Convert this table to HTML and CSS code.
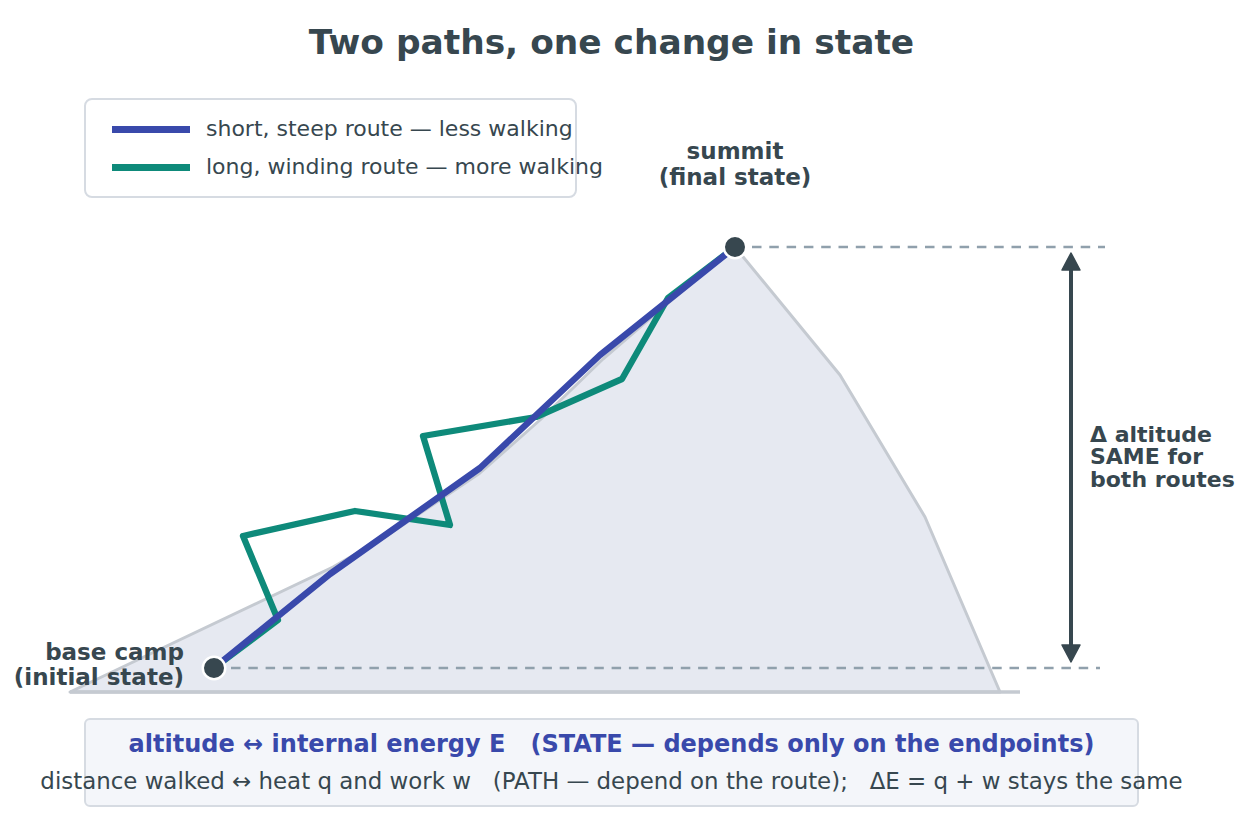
FILE: index.html
```html
<!DOCTYPE html>
<html lang="en">
<head>
<meta charset="utf-8">
<title>Two paths, one change in state</title>
<link rel="stylesheet" href="styles.css">
</head>
<body>
<div class="page">
  <h1 class="title">Two paths, one change in state</h1>
  <div class="chart">
    <svg class="plot" width="1249" height="657" viewBox="0 61 1249 657" xmlns="http://www.w3.org/2000/svg">
      <polygon class="mountain" points="70,692 333,567 385,537 480,473 540,420 603,359 668,303 735,247 840,375 925,517 1000,692"/>
      <line class="ground" x1="70" y1="692" x2="1020" y2="692"/>
      <line class="guide" x1="752" y1="247" x2="1105" y2="247"/>
      <line class="guide" x1="231" y1="668" x2="1100" y2="668"/>
      <polyline class="route-long" points="214,668 278,620 243,536 355,511 450,525 423,436 536,417 622,379 668,298 735,247"/>
      <polyline class="route-short" points="214,668 330,574 480,468 600,355 735,247"/>
      <circle class="state-dot" cx="214" cy="668" r="11.25"/>
      <circle class="state-dot" cx="735" cy="247" r="11.25"/>
      <line class="delta-shaft" x1="1071" y1="266" x2="1071" y2="650"/>
      <polygon class="delta-head" points="1071,253 1062,270 1080,270"/>
      <polygon class="delta-head" points="1071,662 1062,645 1080,645"/>
      <text class="label" text-anchor="middle"><tspan x="735" y="159">summit</tspan><tspan x="735" y="185">(final state)</tspan></text>
      <text class="label" text-anchor="end"><tspan x="184" y="660">base camp</tspan><tspan x="184" y="685">(initial state)</tspan></text>
      <text class="label label-side" text-anchor="start"><tspan x="1090" y="442">Δ altitude</tspan><tspan x="1090" y="464">SAME for</tspan><tspan x="1090" y="487">both routes</tspan></text>
    </svg>
    <div class="legend">
      <div class="legend-row"><span class="swatch swatch-short"></span><span class="legend-text">short, steep route — less walking</span></div>
      <div class="legend-row"><span class="swatch swatch-long"></span><span class="legend-text">long, winding route — more walking</span></div>
    </div>
  </div>
  <div class="caption">
    <div class="caption-line caption-state">altitude ↔ internal energy E   (STATE — depends only on the endpoints)</div>
    <div class="caption-line caption-path">distance walked ↔ heat q and work w   (PATH — depend on the route);   ΔE = q + w stays the same</div>
  </div>
</div>
</body>
</html>
```

FILE: styles.css
```css
html, body {
  margin: 0;
  padding: 0;
  background: #ffffff;
}
body {
  font-family: "DejaVu Sans", "Liberation Sans", sans-serif;
  color: #37474f;
  overflow: hidden;
}
.page {
  width: 1249px;
  height: 835px;
  display: flex;
  flex-direction: column;
}
.title {
  margin: 0;
  padding-top: 22px;
  padding-right: 26px;
  height: 39px;
  line-height: 40px;
  font-size: 34.4px;
  font-weight: bold;
  text-align: center;
  color: #37474f;
}
.chart {
  position: relative;
  height: 657px;
}
.plot {
  display: block;
}
.mountain {
  fill: #e6e9f1;
  stroke: #c5cad1;
  stroke-width: 3;
  stroke-linejoin: round;
}
.ground {
  stroke: #c5cad1;
  stroke-width: 3.5;
}
.guide {
  stroke: #90a0ac;
  stroke-width: 2.4;
  stroke-dasharray: 9.5 7.8;
}
.route-long {
  fill: none;
  stroke: #0e8a7a;
  stroke-width: 6.3;
  stroke-linejoin: round;
}
.route-short {
  fill: none;
  stroke: #3949ab;
  stroke-width: 6.5;
  stroke-linejoin: round;
}
.state-dot {
  fill: #37474f;
  stroke: #ffffff;
  stroke-width: 2.5;
}
.delta-shaft {
  stroke: #37474f;
  stroke-width: 4;
}
.delta-head {
  fill: #37474f;
  stroke: #37474f;
  stroke-width: 1.5;
  stroke-linejoin: round;
}
.label {
  font-family: "DejaVu Sans", sans-serif;
  font-size: 23px;
  font-weight: bold;
  fill: #37474f;
}
.label-side {
  font-size: 22px;
}
.legend {
  position: absolute;
  left: 84px;
  top: 37px;
  width: 493px;
  height: 100px;
  box-sizing: border-box;
  border: 2px solid #d6dbe2;
  border-radius: 8px;
  background: #ffffff;
  padding: 10px 0 0 26px;
}
.legend-row {
  display: flex;
  align-items: center;
  gap: 16px;
  height: 38px;
  white-space: nowrap;
}
.swatch {
  display: block;
  width: 78px;
  height: 7px;
  flex: none;
}
.swatch-short { background: #3949ab; }
.swatch-long { background: #0e8a7a; }
.legend-text {
  font-size: 22px;
  line-height: 38px;
  color: #37474f;
}
.caption {
  margin-left: 84px;
  width: 1055px;
  height: 89px;
  box-sizing: border-box;
  border: 2px solid #d6dbe2;
  border-radius: 6px;
  background: #f4f6fa;
  padding-top: 10px;
  display: flex;
  flex-direction: column;
  align-items: center;
  gap: 10px;
}
.caption-line {
  white-space: pre;
  flex: none;
}
.caption-state {
  font-size: 24px;
  line-height: 28px;
  font-weight: bold;
  color: #3949ab;
}
.caption-path {
  font-size: 22.9px;
  line-height: 27px;
  color: #37474f;
}
```
